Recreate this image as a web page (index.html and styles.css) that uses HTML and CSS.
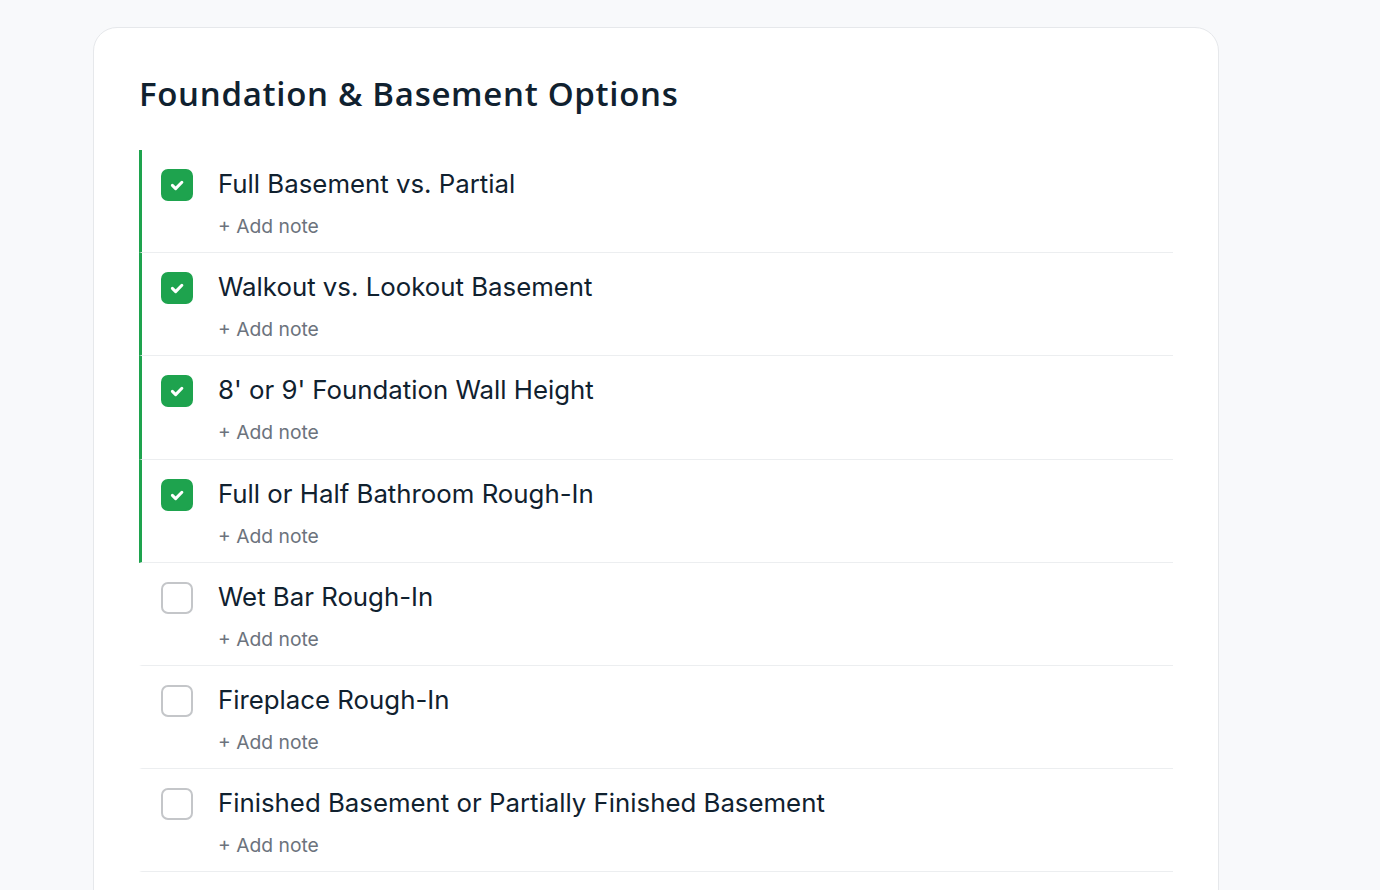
FILE: index.html
```html
<!DOCTYPE html>
<html lang="en">
<head>
    <meta charset="UTF-8">
    <meta name="viewport" content="width=device-width, initial-scale=1.0">
    <title>Foundation &amp; Basement Options</title>
    <link rel="stylesheet" href="styles.css">
</head>
<body>

    <div class="card">
        <h2>Foundation &amp; Basement Options</h2>

        <ul class="options">
            <li class="option checked">
                <span class="box"><svg viewBox="0 0 16 16"><path d="M4.3 8.3l2.6 2.6 5-5.1"/></svg></span>
                <div class="text">
                    <div class="title">Full Basement vs. Partial</div>
                    <div class="note">+ Add note</div>
                </div>
            </li>
            <li class="option checked">
                <span class="box"><svg viewBox="0 0 16 16"><path d="M4.3 8.3l2.6 2.6 5-5.1"/></svg></span>
                <div class="text">
                    <div class="title">Walkout vs. Lookout Basement</div>
                    <div class="note">+ Add note</div>
                </div>
            </li>
            <li class="option checked">
                <span class="box"><svg viewBox="0 0 16 16"><path d="M4.3 8.3l2.6 2.6 5-5.1"/></svg></span>
                <div class="text">
                    <div class="title">8' or 9' Foundation Wall Height</div>
                    <div class="note">+ Add note</div>
                </div>
            </li>
            <li class="option checked">
                <span class="box"><svg viewBox="0 0 16 16"><path d="M4.3 8.3l2.6 2.6 5-5.1"/></svg></span>
                <div class="text">
                    <div class="title">Full or Half Bathroom Rough-In</div>
                    <div class="note">+ Add note</div>
                </div>
            </li>
            <li class="option">
                <span class="box"></span>
                <div class="text">
                    <div class="title">Wet Bar Rough-In</div>
                    <div class="note">+ Add note</div>
                </div>
            </li>
            <li class="option">
                <span class="box"></span>
                <div class="text">
                    <div class="title">Fireplace Rough-In</div>
                    <div class="note">+ Add note</div>
                </div>
            </li>
            <li class="option">
                <span class="box"></span>
                <div class="text">
                    <div class="title">Finished Basement or Partially Finished Basement</div>
                    <div class="note">+ Add note</div>
                </div>
            </li>
        </ul>
    </div>

</body>
</html>
```

FILE: styles.css
```css
body {
    margin: 0;
    padding: 27px 0 0 93px;
    background-color: #f8f9fb;
    font-family: Inter, "Liberation Sans", sans-serif;
    color: #10212f;
    height: 863px;
    overflow: hidden;
}
.card {
    width: 1034px;
    background: #fff;
    border: 1px solid #e6e8eb;
    border-radius: 24px;
    padding: 46px 45px 60px;
}
h2 {
    margin: 0 0 36px;
    font-family: "Open Sans", sans-serif;
    font-size: 33px;
    line-height: 40px;
    font-weight: 600;
    letter-spacing: 0.7px;
}
.options {
    list-style: none;
    margin: 0;
    padding: 0;
}
.option {
    display: flex;
    gap: 25px;
    padding: 16px 0 14.2px 19px;
    border-bottom: 1px solid #eceef0;
    border-left: 3px solid transparent;
}
.option.checked {
    border-left-color: #1ea34e;
}
.box {
    flex: none;
    width: 32px;
    height: 32px;
    margin-top: 3px;
    box-sizing: border-box;
    border: 2px solid #c4c6c9;
    border-radius: 7px;
    display: flex;
    align-items: center;
    justify-content: center;
}
.checked .box {
    background: #1ea34e;
    border-color: #1ea34e;
}
.box svg {
    width: 20px;
    height: 20px;
    fill: none;
    stroke: #fff;
    stroke-width: 2.4;
    stroke-linecap: round;
    stroke-linejoin: round;
}
.title {
    font-size: 25.8px;
    line-height: 36px;
}
.note {
    margin-top: 12px;
    font-size: 19.3px;
    line-height: 24px;
    color: #6c737d;
}
```
